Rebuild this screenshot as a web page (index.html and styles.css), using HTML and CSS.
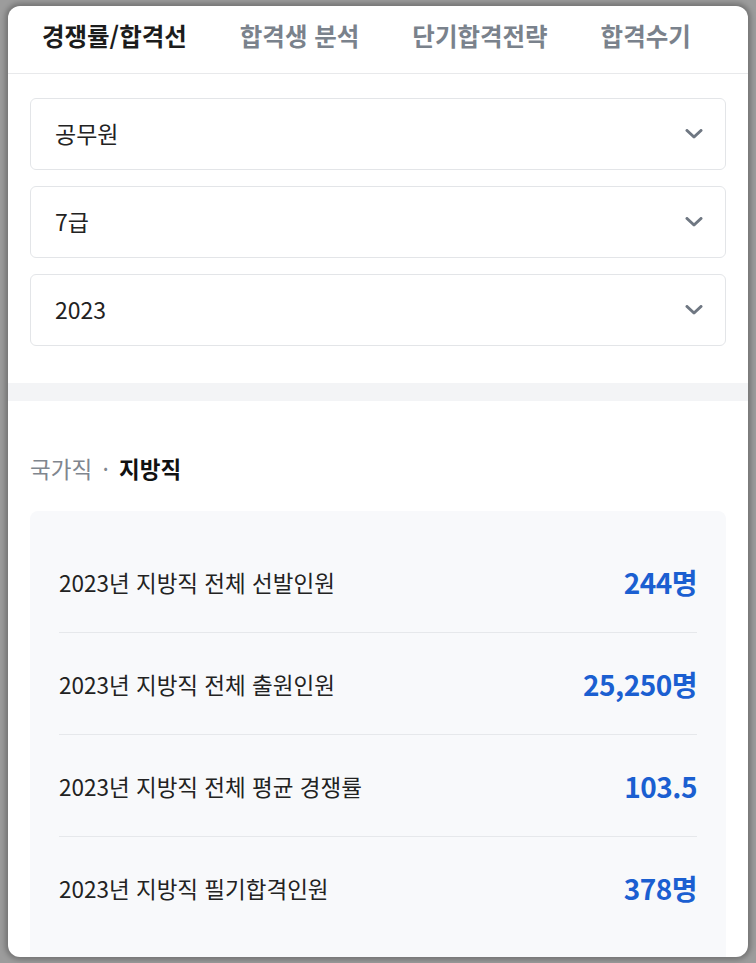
FILE: index.html
```html
<!DOCTYPE html>
<html lang="ko">
<head>
    <meta charset="UTF-8">
    <meta name="viewport" content="width=device-width, initial-scale=1.0">
    <title>경쟁률/합격선</title>
    <link rel="stylesheet" href="styles.css">
</head>
<body>
    <div class="screen">
        <nav class="tabs">
            <a class="tab active" href="#">경쟁률/합격선</a>
            <a class="tab" href="#">합격생 분석</a>
            <a class="tab" href="#">단기합격전략</a>
            <a class="tab" href="#">합격수기</a>
        </nav>

        <div class="filters">
            <div class="select">
                <span>공무원</span>
                <svg class="chevron" width="18" height="10" viewBox="0 0 18 10"><path d="M2 1.5l7 6.5 7-6.5" fill="none" stroke="#6f7782" stroke-width="3" stroke-linecap="round" stroke-linejoin="round"/></svg>
            </div>
            <div class="select">
                <span>7급</span>
                <svg class="chevron" width="18" height="10" viewBox="0 0 18 10"><path d="M2 1.5l7 6.5 7-6.5" fill="none" stroke="#6f7782" stroke-width="3" stroke-linecap="round" stroke-linejoin="round"/></svg>
            </div>
            <div class="select">
                <span>2023</span>
                <svg class="chevron" width="18" height="10" viewBox="0 0 18 10"><path d="M2 1.5l7 6.5 7-6.5" fill="none" stroke="#6f7782" stroke-width="3" stroke-linecap="round" stroke-linejoin="round"/></svg>
            </div>
        </div>

        <div class="band"></div>

        <section class="stats">
            <h2 class="kind">
                <span class="kind-off">국가직</span>
                <span class="dot">·</span>
                <span class="kind-on">지방직</span>
            </h2>
            <div class="card">
                <div class="row">
                    <span class="label">2023년 지방직 전체 선발인원</span>
                    <span class="value">244명</span>
                </div>
                <div class="row">
                    <span class="label">2023년 지방직 전체 출원인원</span>
                    <span class="value">25,250명</span>
                </div>
                <div class="row">
                    <span class="label">2023년 지방직 전체 평균 경쟁률</span>
                    <span class="value">103.5</span>
                </div>
                <div class="row">
                    <span class="label">2023년 지방직 필기합격인원</span>
                    <span class="value">378명</span>
                </div>
            </div>
        </section>
    </div>
</body>
</html>
```

FILE: styles.css
```css
html, body {
    height: 100%;
}
body {
    margin: 0;
    background: #9c9c9c;
    font-family: "Noto Sans CJK KR", "Noto Sans", sans-serif;
    color: #222;
}
.screen {
    box-sizing: border-box;
    height: 951px;
    margin: 0 8px;
    position: relative;
    top: 6px;
    background: #fff;
    border-radius: 12px;
    overflow: hidden;
    box-shadow: 0 0 5px 3px rgba(0, 0, 0, 0.25);
}
.tabs {
    display: flex;
    align-items: center;
    gap: 53px;
    height: 67px;
    padding: 0 0 0 34px;
    border-bottom: 1px solid #e8e9eb;
}
.tab {
    font-size: 24.5px;
    font-weight: bold;
    color: #7a828c;
    text-decoration: none;
    line-height: 1;
    margin-top: -7px;
}
.tab.active {
    color: #1c1c1c;
}
.filters {
    display: flex;
    flex-direction: column;
    gap: 16px;
    padding: 24px 22px 37px;
}
.select {
    display: flex;
    align-items: center;
    justify-content: space-between;
    height: 70px;
    padding: 0 22px 0 24px;
    border: 1px solid #e3e5e8;
    border-radius: 6px;
    font-size: 23px;
}
.select span {
    margin-top: -2px;
}
.band {
    height: 18px;
    background: #f3f4f6;
}
.stats {
    padding: 53px 22px 0;
}
.kind {
    margin: 0 0 29px;
    font-size: 22.5px;
    line-height: 28px;
    font-weight: normal;
}
.kind-off {
    color: #80868e;
}
.dot {
    color: #80868e;
    margin: 0 4px;
}
.kind-on {
    font-weight: bold;
    color: #111;
}
.card {
    background: #f8f9fb;
    border-radius: 8px;
    padding: 20px 29px 40px;
}
.row {
    display: flex;
    align-items: center;
    justify-content: space-between;
    height: 101px;
    border-bottom: 1px solid #e6e8eb;
}
.row:last-child {
    border-bottom: none;
}
.label {
    font-size: 22.5px;
    color: #222;
}
.value {
    font-size: 28px;
    font-weight: bold;
    color: #1b5fd1;
    letter-spacing: -0.5px;
}
```
